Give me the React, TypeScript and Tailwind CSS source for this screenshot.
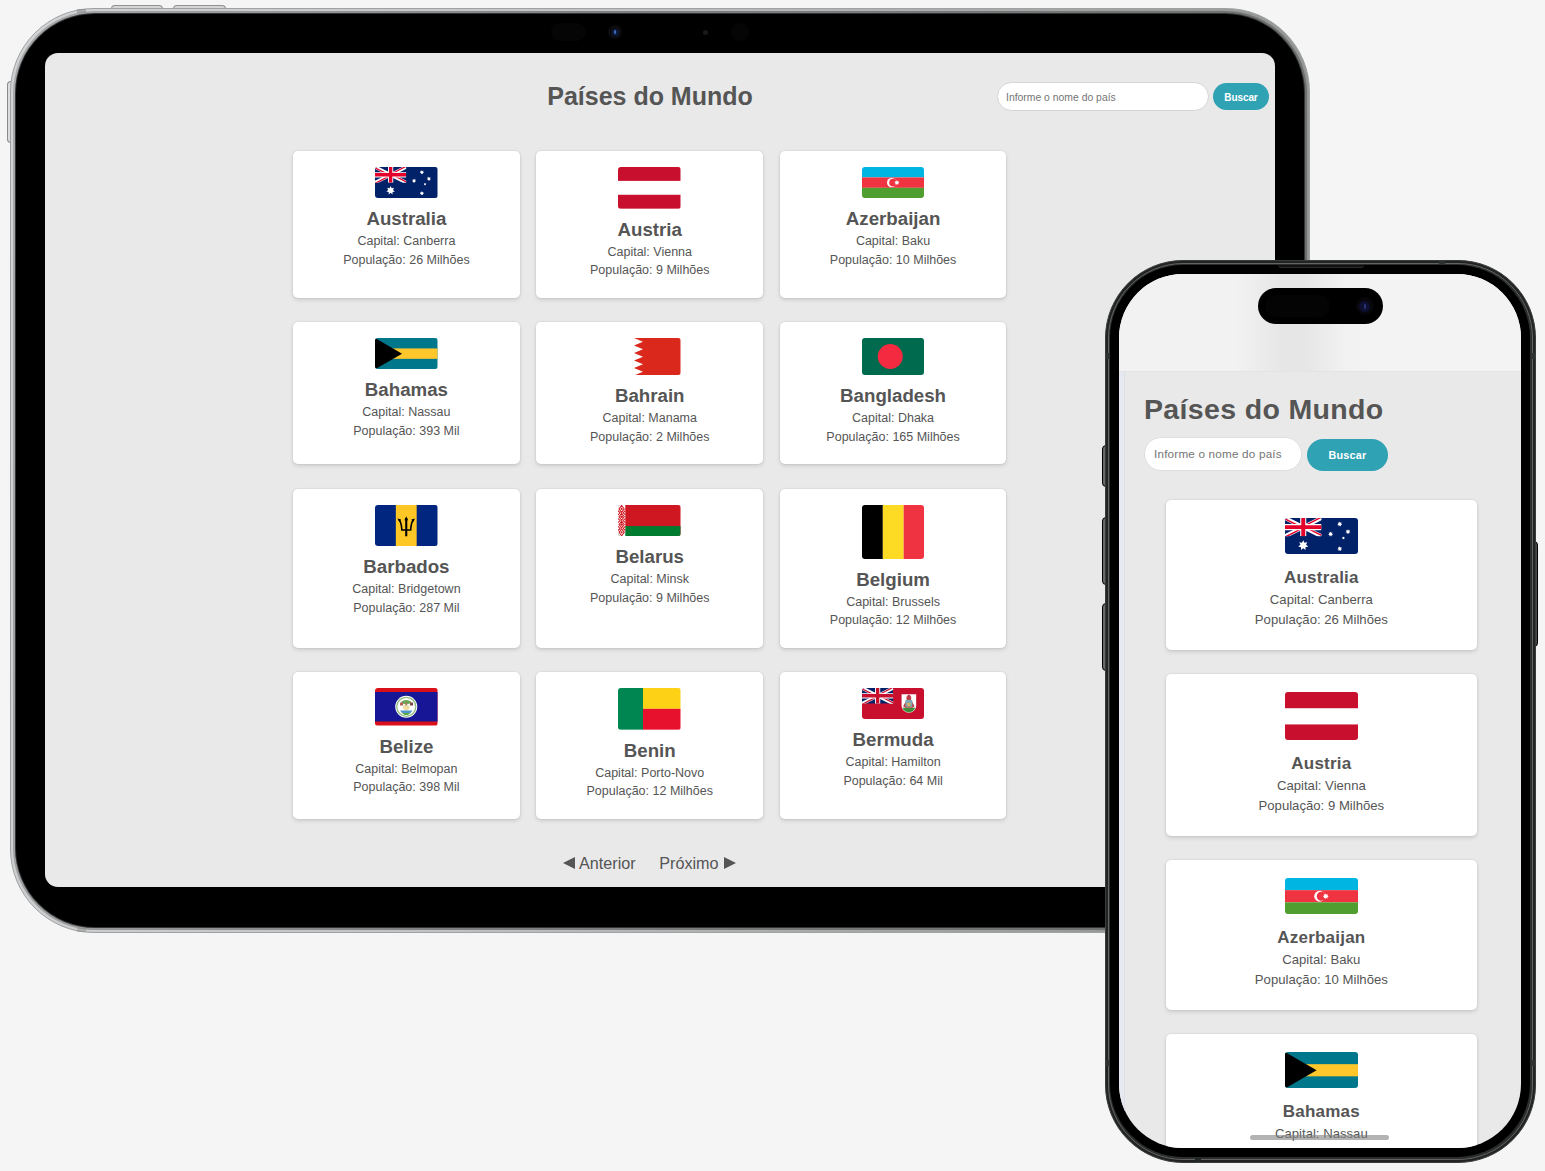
import type { ReactNode } from "react";

type Size = "tablet" | "phone";

interface Country {
  name: string;
  capital: string;
  population: string;
  ratio: string;
  flag: ReactNode;
}

/* Union flag canton, drawn on a 60x30 area. */
function UnionJack({ blue, red }: { blue: string; red: string }) {
  return (
    <svg x="0" y="0" width="60" height="30" viewBox="0 0 60 30">
      <rect width="60" height="30" fill={blue} />
      <path d="M0 0L60 30M60 0L0 30" stroke="#fff" strokeWidth="6.5" />
      <path d="M0 1.5L28 15.5M60 -1.5L32 13M60 28.5L32 14.5M0 31.5L28 17" stroke={red} strokeWidth="2.4" />
      <path d="M30 0V30M0 15H60" stroke="#fff" strokeWidth="10" />
      <path d="M30 0V30M0 15H60" stroke={red} strokeWidth="6.5" />
    </svg>
  );
}

function starPoints(cx: number, cy: number, r: number, n: number) {
  const pts: string[] = [];
  for (let i = 0; i < n * 2; i++) {
    const rad = i % 2 === 0 ? r : r * 0.55;
    const a = (Math.PI * i) / n - Math.PI / 2;
    pts.push(`${(cx + rad * Math.cos(a)).toFixed(2)},${(cy + rad * Math.sin(a)).toFixed(2)}`);
  }
  return pts.join(" ");
}

const australia = (
  <svg viewBox="0 0 120 60" preserveAspectRatio="none" className="block size-full">
    <rect width="120" height="60" fill="#012169" />
    <UnionJack blue="#012169" red="#e4002b" />
    <g fill="#fff">
      <polygon points={starPoints(30, 45, 8.5, 7)} />
      <polygon points={starPoints(90, 10, 4.2, 7)} />
      <polygon points={starPoints(75, 26.5, 4.2, 7)} />
      <polygon points={starPoints(103.5, 22.5, 4.2, 7)} />
      <polygon points={starPoints(90, 50.5, 4.2, 7)} />
      <polygon points={starPoints(96, 33, 2.6, 5)} />
    </g>
  </svg>
);

const austria = (
  <svg viewBox="0 0 3 3" preserveAspectRatio="none" className="block size-full">
    <rect width="3" height="1" fill="#c8102e" />
    <rect y="2" width="3" height="1" fill="#c8102e" />
  </svg>
);

const azerbaijan = (
  <svg viewBox="0 0 120 60" preserveAspectRatio="none" className="block size-full">
    <rect width="120" height="20" fill="#00b5e2" />
    <rect y="20" width="120" height="20" fill="#ef3340" />
    <rect y="40" width="120" height="20" fill="#509e2f" />
    <circle cx="57" cy="30" r="9" fill="#fff" />
    <circle cx="59.5" cy="30" r="7.3" fill="#ef3340" />
    <polygon points={starPoints(67, 30, 5, 8)} fill="#fff" />
  </svg>
);

const bahamas = (
  <svg viewBox="0 0 120 60" preserveAspectRatio="none" className="block size-full">
    <rect width="120" height="60" fill="#00778b" />
    <rect y="20" width="120" height="20" fill="#ffc72c" />
    <path d="M0 0L52 30L0 60Z" fill="#000" />
  </svg>
);

const bahrain = (
  <svg viewBox="0 0 125 75" preserveAspectRatio="none" className="block size-full">
    <path
      d="M125 0H32L50 7.5L32 15L50 22.5L32 30L50 37.5L32 45L50 52.5L32 60L50 67.5L32 75H125Z"
      fill="#da291c"
    />
  </svg>
);

const bangladesh = (
  <svg viewBox="0 0 125 75" preserveAspectRatio="none" className="block size-full">
    <rect width="125" height="75" fill="#006a4e" />
    <circle cx="56.5" cy="37" r="25" fill="#f42a41" />
  </svg>
);

const barbados = (
  <svg viewBox="0 0 120 80" preserveAspectRatio="none" className="block size-full">
    <rect width="120" height="80" fill="#00267f" />
    <rect x="40" width="40" height="80" fill="#ffc726" />
    <g fill="none" stroke="#000">
      <path d="M60 25V60" strokeWidth="4" />
      <path d="M46 28C51 34 51 42 51.5 48H68.5C69 42 69 34 74 28" strokeWidth="3" />
    </g>
    <path d="M60 21.5L56.5 29.5H63.5ZM43 26L50 28L47 33ZM77 26L70 28L73 33Z" fill="#000" />
  </svg>
);

const belarus = (
  <svg viewBox="0 0 120 60" preserveAspectRatio="none" className="block size-full">
    <rect width="120" height="60" fill="#ce1720" />
    <rect y="40.5" width="120" height="19.5" fill="#007c30" />
    <rect width="14" height="60" fill="#fff" />
    <g fill="none" stroke="#ce1720" strokeWidth="2">
      <path d="M7 1L12 7.5L7 14L2 7.5ZM7 16L12 22.5L7 29L2 22.5ZM7 31L12 37.5L7 44L2 37.5ZM7 46L12 52.5L7 59L2 52.5Z" />
      <path d="M0 11L4 15L0 19M14 11L10 15L14 19M0 26L4 30L0 34M14 26L10 30L14 34M0 41L4 45L0 49M14 41L10 45L14 49" />
    </g>
    <g fill="#ce1720">
      <circle cx="7" cy="7.5" r="2" />
      <circle cx="7" cy="22.5" r="2.5" />
      <circle cx="7" cy="37.5" r="2.5" />
      <circle cx="7" cy="52.5" r="2" />
    </g>
  </svg>
);

const belgium = (
  <svg viewBox="0 0 3 3" preserveAspectRatio="none" className="block size-full">
    <rect width="1" height="3" fill="#000" />
    <rect x="1" width="1" height="3" fill="#fdda24" />
    <rect x="2" width="1" height="3" fill="#ef3340" />
  </svg>
);

const belize = (
  <svg viewBox="0 0 125 75" preserveAspectRatio="none" className="block size-full">
    <rect width="125" height="75" fill="#d90f19" />
    <rect y="8" width="125" height="59" fill="#171696" />
    <circle cx="62.5" cy="37.5" r="22" fill="#fff" />
    <circle cx="62.5" cy="37.5" r="19" fill="none" stroke="#8dbb7c" strokeWidth="2.5" />
    <path d="M52 29C54 22 71 22 73 29L67 32H58Z" fill="#6aa757" />
    <rect x="60.5" y="29" width="4" height="8" fill="#a98263" />
    <rect x="50" y="29" width="6" height="6" fill="#b5645a" />
    <rect x="70" y="29" width="6" height="6" fill="#7b4a44" />
    <path d="M56 35H69V41L62.5 46L56 41Z" fill="#efdfa0" />
    <path d="M50 45H75L71 50H54Z" fill="#4f95cc" />
    <path d="M54 50H71L66 54H59Z" fill="#5aa845" />
  </svg>
);

const benin = (
  <svg viewBox="0 0 120 80" preserveAspectRatio="none" className="block size-full">
    <rect width="48" height="80" fill="#008751" />
    <rect x="48" width="72" height="40" fill="#fcd116" />
    <rect x="48" y="40" width="72" height="40" fill="#e8112d" />
  </svg>
);

const bermuda = (
  <svg viewBox="0 0 120 60" preserveAspectRatio="none" className="block size-full">
    <rect width="120" height="60" fill="#c8102e" />
    <UnionJack blue="#012169" red="#c8102e" />
    <path d="M76 12H104V33C104 42 97 47 90 47.5C83 47 76 42 76 33Z" fill="#fff" />
    <path d="M77.5 38H102.5C100 44 95 46.5 90 47C85 46.5 80 44 77.5 38Z" fill="#3f8f3a" />
    <path d="M86 22C84 18 87 13 90 13C93 13 96 18 94 22L101 35L97 38H83L79 35Z" fill="#b9404a" />
    <rect x="83.5" y="23" width="13" height="13" fill="#7ea9b2" />
    <path d="M86 29H94L92 35H88Z" fill="#d9b15a" />
  </svg>
);

const countries: Country[] = [
  { name: "Australia", capital: "Canberra", population: "26 Milhões", ratio: "aspect-[2/1]", flag: australia },
  { name: "Austria", capital: "Vienna", population: "9 Milhões", ratio: "aspect-[3/2]", flag: austria },
  { name: "Azerbaijan", capital: "Baku", population: "10 Milhões", ratio: "aspect-[2/1]", flag: azerbaijan },
  { name: "Bahamas", capital: "Nassau", population: "393 Mil", ratio: "aspect-[2/1]", flag: bahamas },
  { name: "Bahrain", capital: "Manama", population: "2 Milhões", ratio: "aspect-[5/3]", flag: bahrain },
  { name: "Bangladesh", capital: "Dhaka", population: "165 Milhões", ratio: "aspect-[5/3]", flag: bangladesh },
  { name: "Barbados", capital: "Bridgetown", population: "287 Mil", ratio: "aspect-[3/2]", flag: barbados },
  { name: "Belarus", capital: "Minsk", population: "9 Milhões", ratio: "aspect-[2/1]", flag: belarus },
  { name: "Belgium", capital: "Brussels", population: "12 Milhões", ratio: "aspect-[15/13]", flag: belgium },
  { name: "Belize", capital: "Belmopan", population: "398 Mil", ratio: "aspect-[5/3]", flag: belize },
  { name: "Benin", capital: "Porto-Novo", population: "12 Milhões", ratio: "aspect-[3/2]", flag: benin },
  { name: "Bermuda", capital: "Hamilton", population: "64 Mil", ratio: "aspect-[2/1]", flag: bermuda },
];

const cardStyles = {
  tablet: {
    card: "pt-4 pb-[17.8px]",
    flag: "w-[62.5px]",
    name: "mt-[7.9px] mb-[0.8px] text-[18.7px] leading-[25.3px]",
    line: "text-[12.5px] leading-[18.6px]",
  },
  phone: {
    card: "w-[310.5px] pt-[18px] pb-[21px]",
    flag: "w-[73px]",
    name: "mt-[11px] text-[17px] leading-[25px] tracking-[0.22px]",
    line: "text-[13.15px] leading-[19.2px]",
  },
};

function CountryCard({ country, size }: { country: Country; size: Size }) {
  const s = cardStyles[size];
  return (
    <article
      className={`flex flex-col items-center rounded-[5px] bg-white shadow-[0_0_1px_1px_rgba(0,0,0,0.04),0_2px_4px_rgba(0,0,0,0.12)] ${s.card}`}
    >
      <div className={`shrink-0 overflow-hidden rounded-[3px] ${s.flag} ${country.ratio}`}>{country.flag}</div>
      <h2 className={`font-bold whitespace-nowrap ${s.name}`}>{country.name}</h2>
      <p className={`whitespace-nowrap ${s.line}`}>Capital: {country.capital}</p>
      <p className={`whitespace-nowrap ${s.line}`}>População: {country.population}</p>
    </article>
  );
}

function TabletScreen() {
  return (
    <div className="h-[834px] w-[1230px] overflow-hidden rounded-[13px] bg-[#e9e9e9]">
      <header className="grid h-[98px] grid-cols-[502px_206px_1fr] items-start">
        <h1 className="col-start-2 mt-[28px] text-center text-[25px] leading-[30px] font-bold whitespace-nowrap">
          Países do Mundo
        </h1>
        <form className="mt-[29px] flex items-center gap-1 justify-self-end pr-1.5">
          <input
            className="h-[29px] w-[212px] rounded-full border border-[#d4d4d4] bg-white px-2 pt-px text-[10.4px] outline-none placeholder:text-[#757575]"
            placeholder="Informe o nome do país"
          />
          <button
            type="button"
            className="h-[27px] w-14 rounded-full bg-[#2fa2b4] pt-px text-[10px] font-bold tracking-[-0.1px] text-white"
          >
            Buscar
          </button>
        </form>
      </header>
      <main className="ml-[248px] grid w-[713.5px] grid-cols-3 gap-x-[16.5px] gap-y-[24.3px]">
        {countries.map((c) => (
          <CountryCard key={c.name} country={c} size="tablet" />
        ))}
      </main>
      <nav className="mt-[32px] ml-[518px] flex items-center text-[16.2px] leading-6">
        <button type="button" className="flex items-center gap-1">
          <svg viewBox="0 0 12 12" className="h-3 w-3">
            <path d="M12 0V12L0 6Z" fill="currentColor" />
          </svg>
          Anterior
        </button>
        <button type="button" className="ml-[23.5px] flex items-center gap-[5px]">
          Próximo
          <svg viewBox="0 0 12 12" className="h-3 w-3">
            <path d="M0 0V12L12 6Z" fill="currentColor" />
          </svg>
        </button>
      </nav>
    </div>
  );
}

function Tablet() {
  return (
    <section className="relative mt-2 ml-[10px] w-[1300px]">
      <div className="absolute -top-[3px] left-[101px] h-[5px] w-[52px] rounded-t-sm border border-b-0 border-[#8f9193] bg-[#d5d6d7]" />
      <div className="absolute -top-[3px] left-[163px] h-[5px] w-[53px] rounded-t-sm border border-b-0 border-[#8f9193] bg-[#d5d6d7]" />
      <div className="absolute top-[73px] -left-[3px] h-[62px] w-[5px] rounded-l-sm border border-r-0 border-[#8a8a8a] bg-[#dcdcdc]" />
      <div className="relative h-[924.5px] rounded-[84px] border border-[#a0a1a2] bg-[linear-gradient(100deg,#d2d3d4_0%,#c2c3c4_40%,#a0a1a1_75%,#8d8e8e_100%)] p-[2px]">
        <div className="h-full rounded-[82px] bg-[linear-gradient(100deg,#a8a9aa_0%,#808182_40%,#6a6b6b_100%)] p-[2px]">
          <div className="h-full rounded-[80px] bg-[#333435] p-px">
            <div className="h-full rounded-[79px] bg-black pt-[39px] pl-[29px]">
              <TabletScreen />
            </div>
          </div>
        </div>
      </div>
      <div className="absolute top-[1px] left-[67px] h-[4px] w-[9px] bg-[#808182]/50" />
      <div className="absolute bottom-[1px] left-[67px] h-[4px] w-[9px] bg-[#808182]/40" />
      <div className="absolute top-[15px] left-[541px] h-[18px] w-[35px] rounded-full bg-[#050505]" />
      <div className="absolute top-[17px] left-[598px] flex size-[14px] items-center justify-center rounded-full bg-[#0b0b10]">
        <div className="flex size-[7px] items-center justify-center rounded-full bg-[#0c1a3c]">
          <div className="h-[4px] w-[2px] rounded-full bg-[#3f67b8]" />
        </div>
      </div>
      <div className="absolute top-[21.5px] left-[692.5px] size-[5px] rounded-full bg-[#1a1a1a]" />
      <div className="absolute top-[15px] left-[721px] size-[18px] rounded-full bg-[#050505]" />
    </section>
  );
}

function PhoneScreen() {
  return (
    <div className="relative h-[874px] w-[402px] overflow-hidden rounded-[64px] bg-[#e9e9e9]">
      <div className="h-[98px] border-b border-[#e4e4e4] bg-[linear-gradient(90deg,#f2f2f2_0%,#f2f2f2_29%,#e6e6e6_41%,#e6e6e6_46%,#f1f1f1_56%,#f3f3f3_62%)] pt-[14px]">
        <div className="ml-[138.5px] flex h-[36px] w-[125px] items-center justify-between rounded-full bg-black pr-[9px] pl-[7px]">
          <div className="h-[22px] w-[65px] rounded-full bg-[#040404]" />
          <div className="flex size-[18px] items-center justify-center rounded-full bg-[#07060b]">
            <div className="flex size-[11px] items-center justify-center rounded-full bg-[#0d1030]">
              <div className="h-[5px] w-[2px] rounded-full bg-[#2a3474]" />
            </div>
          </div>
        </div>
      </div>
      <div className="flex h-[776px]">
        <div className="w-[5.5px] shrink-0 border-r border-[#dcdfe6] bg-[#e6e9f1]" />
        <div className="flex-1">
          <div className="pl-[19.5px]">
            <h1 className="mt-[20px] text-[28.5px] leading-[34px] font-bold tracking-[0.34px] whitespace-nowrap">
              Países do Mundo
            </h1>
            <form className="mt-[10.5px] flex items-start gap-[5px]">
              <input
                className="h-[34px] w-[158px] rounded-full border border-[#dedede] bg-white px-[9px] text-[11.7px] tracking-[0.2px] outline-none placeholder:text-[#757575]"
                placeholder="Informe o nome do país"
              />
              <button
                type="button"
                className="mt-[2.8px] h-[32px] w-[81px] rounded-full bg-[#2fa2b4] text-[10.8px] font-bold tracking-[0.25px] text-white"
              >
                Buscar
              </button>
            </form>
          </div>
          <main className="mt-[28.6px] ml-[41.6px] flex flex-col gap-6">
            {countries.slice(0, 4).map((c) => (
              <CountryCard key={c.name} country={c} size="phone" />
            ))}
          </main>
        </div>
      </div>
      <div className="absolute bottom-[8px] left-[131px] h-[5px] w-[139px] rounded-full bg-[#808080]/60" />
    </div>
  );
}

function Phone() {
  return (
    <section className="absolute top-[259.5px] left-[1104.5px] h-[903px] w-[431px]">
      <div className="absolute top-[185px] -left-[2.5px] h-[42px] w-[5px] rounded-l-sm border border-black bg-[#6a6a68]" />
      <div className="absolute top-[257px] -left-[2.5px] h-[68px] w-[5px] rounded-l-sm border border-black bg-[#6a6a68]" />
      <div className="absolute top-[343px] -left-[2.5px] h-[68px] w-[5px] rounded-l-sm border border-black bg-[#6a6a68]" />
      <div className="absolute top-[281px] -right-[2.5px] h-[106px] w-[5px] rounded-r-sm border border-black bg-[#4a4a4a]" />
      <div className="relative h-full rounded-[78px] border border-[#3a3b3b] bg-[#222323] p-[2px]">
        <div className="h-full rounded-[75px] border border-[#626363] bg-[#2b2c2c] p-[1.5px]">
          <div className="h-full rounded-[73px] bg-black pt-[9px] pl-[9px]">
            <PhoneScreen />
          </div>
        </div>
      </div>
      <div className="absolute top-[5px] left-[173px] h-[3px] w-[86px] rounded-b-sm border-b border-[#2c2c2c] bg-[#101010]" />
      <div className="absolute top-[1px] left-[334px] h-[4px] w-[6px] bg-[#2e3332]" />
      <div className="absolute top-[93px] left-[1px] h-[6px] w-[4px] bg-[#2e3332]" />
      <div className="absolute top-[93px] right-[1px] h-[6px] w-[4px] bg-[#2e3332]" />
      <div className="absolute bottom-[97px] left-[1px] h-[6px] w-[4px] bg-[#2e3332]" />
      <div className="absolute right-[1px] bottom-[97px] h-[6px] w-[4px] bg-[#2e3332]" />
      <div className="absolute bottom-[1px] left-[90px] h-[4px] w-[6px] bg-[#232726]" />
    </section>
  );
}

export default function App() {
  return (
    <div className="relative flex h-[1171px] w-[1545px] flex-col items-start overflow-hidden bg-[#f5f5f5] font-['Liberation_Sans',Arial,sans-serif] text-[#555555]">
      <Tablet />
      <Phone />
    </div>
  );
}
